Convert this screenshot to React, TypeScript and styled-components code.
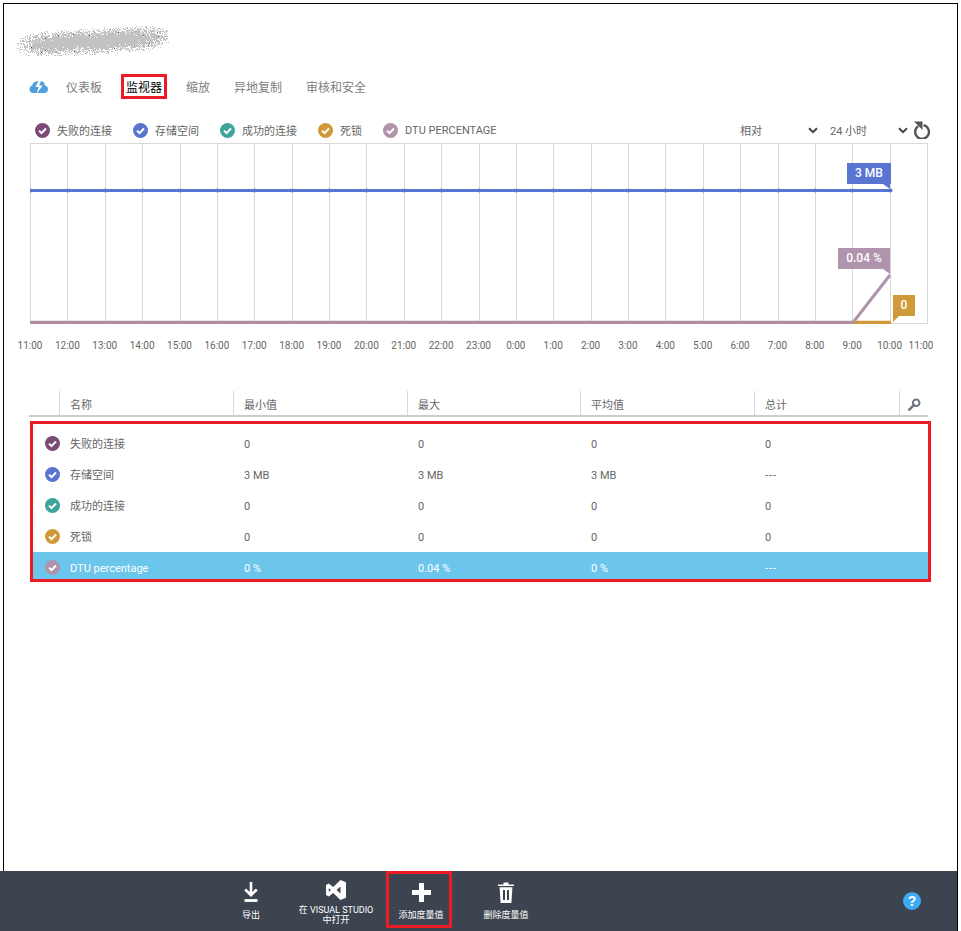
import React from 'react';
import styled, { createGlobalStyle } from 'styled-components';

const purple = '#7b4a75';
const blue = '#5a75d1';
const teal = '#3fa49c';
const ochre = '#d09a3b';
const mauve = '#b093ad';
const red = '#ed1c24';
const grid = '#d9d9d9';
const FONT = 'Roboto, "Noto Sans CJK SC", sans-serif';

const GlobalStyle = createGlobalStyle`
  html, body { margin: 0; padding: 0; background: #fff; }
  body { font-family: ${FONT}; color: #666; overflow: hidden; }
  * { box-sizing: border-box; }
`;

const Page = styled.div`
  display: flex;
  flex-direction: column;
  width: 961px;
  height: 931px;
`;

const Frame = styled.div`
  flex: 1;
  display: flex;
  flex-direction: column;
  width: 955px;
  margin: 3px 0 0 3px;
  border: 1px solid #000;
  border-bottom: none;
`;

const LogoSvg = styled.svg`
  display: block;
  margin: 22px 0 0 13px;
`;

const TabRow = styled.div`
  display: flex;
  align-items: center;
  gap: 24px;
  height: 25px;
  margin-top: 18px;
  padding-left: 25px;
`;

const Tab = styled.div<{ $active?: boolean }>`
  height: 17px;
  font-size: 12px;
  line-height: 20px;
  color: ${p => (p.$active ? '#000' : '#7d7d7d')};
  outline: ${p => (p.$active ? `3px solid ${red}` : 'none')};
  outline-offset: 1px;
  padding: ${p => (p.$active ? '0 1px' : '0')};
  margin: ${p => (p.$active ? '0 -1px' : '0')};
`;

const CloudIcon = styled.svg`
  margin-right: -7px;
`;

const LegendRow = styled.div`
  display: flex;
  align-items: center;
  gap: 21px;
  height: 16px;
  margin-top: 23px;
  padding: 0 27px 0 31px;
`;

const LegendItem = styled.div`
  display: flex;
  align-items: center;
  gap: 7px;
  font-size: 11px;
  color: #666;
  white-space: nowrap;
`;

const Dot = styled.svg`
  display: block;
  flex: none;
`;

const Controls = styled.div`
  display: flex;
  align-items: center;
  gap: 5px;
  margin-left: auto;
`;

const Picker = styled.div`
  display: flex;
  align-items: center;
  justify-content: space-between;
  width: 78px;
  font-size: 11px;
  color: #666;
  & + & { margin-left: 7px; }
`;

const Chart = styled.div`
  position: relative;
  width: 898px;
  height: 181px;
  margin: 5px 0 0 26px;
`;

const ChartSvg = styled.svg`
  display: block;
`;

const Tag = styled.div<{ $color: string; $left: number; $top: number; $width: number }>`
  position: absolute;
  left: ${p => p.$left}px;
  top: ${p => p.$top}px;
  width: ${p => p.$width}px;
  height: 21px;
  background: ${p => p.$color};
  color: #fff;
  font-size: 12px;
  font-weight: 500;
  line-height: 21px;
  text-align: center;
`;

const AxisRow = styled.div`
  display: grid;
  grid-template-columns: repeat(25, 37.375px);
  height: 13px;
  margin: 15px 0 0 7.3px;
`;

const AxisLabel = styled.div`
  font-size: 10px;
  line-height: 14px;
  text-align: center;
  color: #666;
  white-space: nowrap;
  &:last-child { transform: translateX(-6px); }
`;

const TableHead = styled.div`
  display: grid;
  grid-template-columns: 30px 174px 174px 173px 174px 145px 29px;
  width: 899px;
  height: 26px;
  margin: 39px 0 0 25px;
  border-bottom: 2px solid #ccc;
`;

const HeadCell = styled.div`
  display: flex;
  align-items: center;
  padding: 2px 0 0 10px;
  border-left: 1px solid ${grid};
  font-size: 11px;
  color: #666;
  &:first-child { border-left: none; }
`;

const SearchCell = styled.div`
  display: flex;
  align-items: center;
  justify-content: center;
  padding-top: 2px;
  border-left: 1px solid ${grid};
`;

const RowsBox = styled.div`
  width: 901px;
  height: 161px;
  margin: 4px 0 0 26px;
  padding-top: 4px;
  border: 3px solid ${red};
  overflow: hidden;
`;

const Row = styled.div<{ $selected?: boolean }>`
  display: grid;
  grid-template-columns: 26px 174px 174px 173px 174px 1fr;
  align-items: center;
  height: 31px;
  background: ${p => (p.$selected ? '#6cc5eb' : 'transparent')};
  color: ${p => (p.$selected ? '#fff' : '#666')};
  font-size: 11px;
`;

const RowDot = styled.div`
  padding-left: 12px;
`;

const Cell = styled.div<{ $dashes?: boolean }>`
  padding: 2px 0 0 11px;
  line-height: 16px;
  letter-spacing: ${p => (p.$dashes ? '1px' : 'normal')};
`;

const CommandBar = styled.div`
  display: flex;
  align-items: flex-start;
  width: 958px;
  height: 60px;
  padding: 0 36px 0 218px;
  background: #3c444f;
  border-right: 1px solid #000;
`;

const Command = styled.div<{ $marked?: boolean }>`
  display: flex;
  flex-direction: column;
  align-items: center;
  width: 66px;
  height: 57px;
  margin: ${p => (p.$marked ? '0 21px 0 -2px' : '0 19px 0 0')};
  padding-left: ${p => (p.$marked ? '4px' : '0')};
  border: 3px solid ${p => (p.$marked ? red : 'transparent')};
`;

const CommandIcon = styled.div`
  display: flex;
  align-items: center;
  justify-content: center;
  height: 36px;
`;

const CommandLabel = styled.div`
  font-size: 9px;
  line-height: 10px;
  color: #fff;
  text-align: center;
  white-space: nowrap;
`;

const Help = styled.div`
  align-self: center;
  width: 18px;
  height: 18px;
  margin-left: auto;
  border-radius: 50%;
  background: #3fa9f5;
  color: #fff;
  font-family: "Liberation Sans", sans-serif;
  font-size: 14px;
  font-weight: 700;
  line-height: 18px;
  text-align: center;
`;

const Check = ({ color }: { color: string }) => (
  <Dot width="15" height="15" viewBox="0 0 15 15">
    <circle cx="7.5" cy="7.5" r="7.5" fill={color} />
    <path d="M4 7.6l2.5 2.5 4.5-4.6" fill="none" stroke="#fff" strokeWidth="2" />
  </Dot>
);

const Chevron = () => (
  <svg width="10" height="7" viewBox="0 0 10 7">
    <path d="M1 1.2l4 4 4-4" fill="none" stroke="#444" strokeWidth="2" />
  </svg>
);

// scrambled logo, speckled the way the screenshot blurs it out
const speckle = (() => {
  let seed = 7;
  const rnd = () => {
    seed = (seed * 16807) % 2147483647;
    return seed / 2147483647;
  };
  let light = '';
  let dark = '';
  for (let x = 0; x < 152; x++) {
    for (let y = 0; y < 30; y++) {
      const dy = Math.abs(y - 15 - (76 - x) * 0.06) / 15;
      const dx = Math.abs(x - 76) / 76;
      const density = 1.25 - dy * dy * 1.5 - Math.pow(dx, 6);
      if (rnd() < density * 0.85) light += `M${x} ${y}h1v1h-1z`;
      else if (density > 0.7 && rnd() < 0.05) dark += `M${x} ${y}h1v1h-1z`;
    }
  }
  return { light, dark };
})();

const legend = [
  { name: '失败的连接', color: purple },
  { name: '存储空间', color: blue },
  { name: '成功的连接', color: teal },
  { name: '死锁', color: ochre },
  { name: 'DTU PERCENTAGE', color: mauve },
];

const hours = ['11:00', '12:00', '13:00', '14:00', '15:00', '16:00', '17:00', '18:00', '19:00', '20:00', '21:00', '22:00', '23:00', '0:00', '1:00', '2:00', '3:00', '4:00', '5:00', '6:00', '7:00', '8:00', '9:00', '10:00', '11:00'];

const rows = [
  { name: '失败的连接', color: purple, min: '0', max: '0', avg: '0', total: '0' },
  { name: '存储空间', color: blue, min: '3 MB', max: '3 MB', avg: '3 MB', total: '---' },
  { name: '成功的连接', color: teal, min: '0', max: '0', avg: '0', total: '0' },
  { name: '死锁', color: ochre, min: '0', max: '0', avg: '0', total: '0' },
  { name: 'DTU percentage', color: mauve, min: '0 %', max: '0.04 %', avg: '0 %', total: '---', selected: true },
];

const App = () => {
  const lines = Array.from({ length: 25 }, (_, i) => Math.round(i * 37.375) + 0.5);

  return (
    <Page>
      <GlobalStyle />
      <Frame>
        <LogoSvg width="152" height="30" viewBox="0 0 152 30">
          <path d={speckle.light} fill="#c2c2c2" />
          <path d={speckle.dark} fill="#555" />
        </LogoSvg>

        <TabRow>
          <CloudIcon width="20" height="14" viewBox="0 0 20 14">
            <path d="M4 13A3.8 3.8 0 0 1 3.2 5.6 5.5 5.5 0 0 1 8 1.2h5A5 5 0 0 1 16 5.6 3.8 3.8 0 0 1 16 13z" fill="#4f9fdc" />
            <path d="M10 0L6.4 7h3.2L7.6 14l6-8.4h-3.4L12.4 0z" fill="#fff" />
          </CloudIcon>
          <Tab>仪表板</Tab>
          <Tab $active>监视器</Tab>
          <Tab>缩放</Tab>
          <Tab>异地复制</Tab>
          <Tab>审核和安全</Tab>
        </TabRow>

        <LegendRow>
          {legend.map(item => (
            <LegendItem key={item.name}>
              <Check color={item.color} />
              {item.name}
            </LegendItem>
          ))}
          <Controls>
            <Picker>相对<Chevron /></Picker>
            <Picker>24 小时<Chevron /></Picker>
            <svg width="17" height="18" viewBox="0 0 17 18">
              <path d="M5.2 5.2A6.9 6.9 0 1 0 10.5 4.2" fill="none" stroke="#555" strokeWidth="2.4" />
              <path d="M1 0.5h8.5v8.5z" fill="#555" />
            </svg>
          </Controls>
        </LegendRow>

        <Chart>
          <ChartSvg width="898" height="181" viewBox="0 0 898 181">
            <rect x="0.5" y="0.5" width="897" height="180" fill="none" stroke={grid} />
            {lines.map(x => (
              <line key={x} x1={x} x2={x} y1="0" y2="180" stroke={grid} />
            ))}
            <line x1="0" x2="860" y1="47.5" y2="47.5" stroke={blue} strokeWidth="3" />
            {lines.slice(0, 24).map(x => (
              <circle key={x} cx={x} cy="47.5" r="2" fill={blue} />
            ))}
            <line x1="823" x2="861" y1="179.5" y2="179.5" stroke={ochre} strokeWidth="3.6" />
            <line x1="0" x2="823" y1="179.5" y2="179.5" stroke="#ad8f9f" strokeWidth="3.6" />
            <line x1="823" x2="860" y1="179.5" y2="132" stroke={mauve} strokeWidth="3" />
            <path d="M853 41h7v5z" fill={blue} />
            <path d="M853 126h7v5z" fill={mauve} />
            <path d="M863 173h6l-6 6z" fill={ochre} />
          </ChartSvg>
          <Tag $color={blue} $left={817} $top={20} $width={44}>3 MB</Tag>
          <Tag $color={mauve} $left={808} $top={105} $width={52}>0.04 %</Tag>
          <Tag $color={ochre} $left={863} $top={152} $width={22}>0</Tag>
        </Chart>

        <AxisRow>
          {hours.map((h, i) => (
            <AxisLabel key={i}>{h}</AxisLabel>
          ))}
        </AxisRow>

        <TableHead>
          <HeadCell />
          <HeadCell>名称</HeadCell>
          <HeadCell>最小值</HeadCell>
          <HeadCell>最大</HeadCell>
          <HeadCell>平均值</HeadCell>
          <HeadCell>总计</HeadCell>
          <SearchCell>
            <svg width="13" height="13" viewBox="0 0 13 13">
              <circle cx="8.2" cy="4.8" r="3.3" fill="none" stroke="#6f7680" strokeWidth="2" />
              <path d="M5.8 7.2L1.3 11.7" stroke="#6f7680" strokeWidth="2.6" strokeLinecap="round" />
            </svg>
          </SearchCell>
        </TableHead>

        <RowsBox>
          {rows.map(row => (
            <Row key={row.name} $selected={row.selected}>
              <RowDot><Check color={row.color} /></RowDot>
              <Cell>{row.name}</Cell>
              <Cell>{row.min}</Cell>
              <Cell>{row.max}</Cell>
              <Cell>{row.avg}</Cell>
              <Cell $dashes={row.total === '---'}>{row.total}</Cell>
            </Row>
          ))}
        </RowsBox>
      </Frame>

      <CommandBar>
        <Command>
          <CommandIcon>
            <svg width="14" height="20" viewBox="0 0 14 20">
              <path d="M7 0v12.5M1.2 7.5L7 13.2l5.8-5.7" fill="none" stroke="#fff" strokeWidth="2.6" />
              <path d="M0.5 18.5h13" stroke="#fff" strokeWidth="2.8" />
            </svg>
          </CommandIcon>
          <CommandLabel>导出</CommandLabel>
        </Command>
        <Command>
          <CommandIcon>
            <svg width="20" height="20" viewBox="0 0 20 20">
              <path d="M14.5 0L20 2.3v15.4L14.5 20 7.2 13 2.8 16.4 0 15V5L2.8 3.6 7.2 7zM14.5 6.4L10.6 10l3.9 3.6zM2.8 8v4L4.8 10z" fill="#fff" fillRule="evenodd" />
            </svg>
          </CommandIcon>
          <CommandLabel>在 VISUAL STUDIO<br />中打开</CommandLabel>
        </Command>
        <Command $marked>
          <CommandIcon>
            <svg width="19" height="19" viewBox="0 0 19 19">
              <path d="M7 0h5v7h7v5h-7v7H7v-7H0V7h7z" fill="#fff" />
            </svg>
          </CommandIcon>
          <CommandLabel>添加度量值</CommandLabel>
        </Command>
        <Command>
          <CommandIcon>
            <svg width="16" height="21" viewBox="0 0 16 21">
              <path d="M0 2.5h16v1.6H0zM5.5 0.5h5v2h-5z" fill="#fff" />
              <path d="M1.6 5.2h12.8l-1 15.8H2.6zM5 8v10h2V8zM9 8v10h2V8z" fill="#fff" fillRule="evenodd" />
            </svg>
          </CommandIcon>
          <CommandLabel>删除度量值</CommandLabel>
        </Command>
        <Help>?</Help>
      </CommandBar>
    </Page>
  );
};

export default App;
